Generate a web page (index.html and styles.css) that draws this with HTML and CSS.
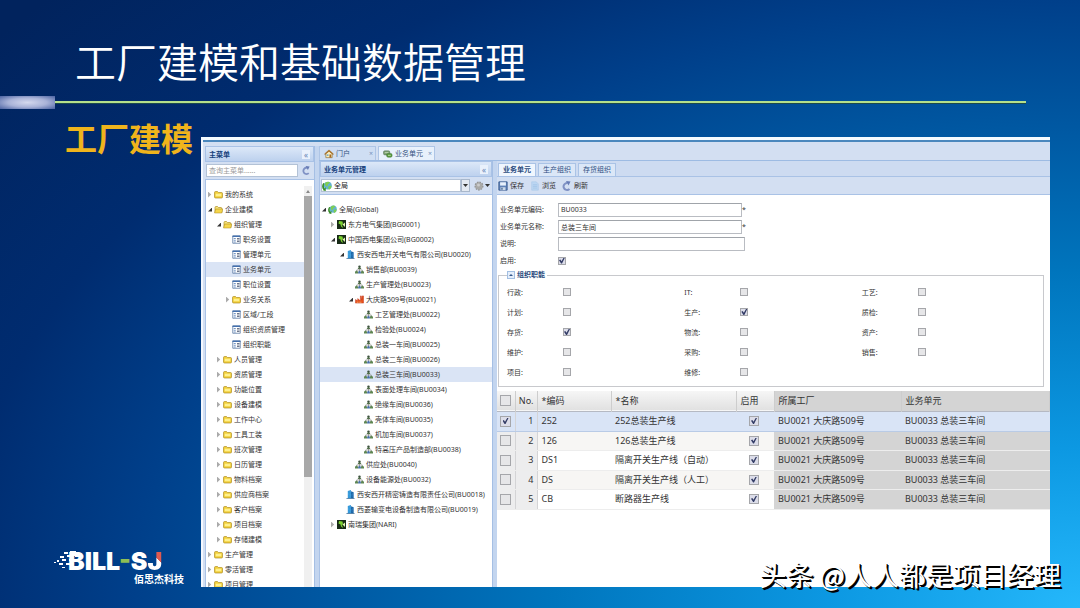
FILE: index.html
```html
<!DOCTYPE html>
<html lang="zh-CN">
<head>
<meta charset="utf-8">
<meta name="viewport" content="width=device-width, initial-scale=1">
<title>工厂建模和基础数据管理</title>
<link rel="stylesheet" href="styles.css">
</head>
<body>
<svg class="sprite" aria-hidden="true">
  <symbol id="folder" viewBox="0 0 18 16"><path d="M1 4.5Q1 2 3 2h4l2 2h6q2 0 2 2v7q0 2-2 2H3q-2 0-2-2z" fill="#f2cf3c" stroke="#a8861a" stroke-width="1.3"/><path d="M3.5 6.5h11v5h-11z" fill="#fff08c"/></symbol>
  <symbol id="folder-open" viewBox="0 0 18 16"><path d="M2 14V4q0-2 2-2h3l2 2h5q2 0 2 3v7z" fill="#f7e47a" stroke="#a8861a" stroke-width="1.3"/><path d="M1 15l2.500-8H17.500L15.500 15z" fill="#f5d64c" stroke="#a8861a"/></symbol>
  <symbol id="form" viewBox="0 0 18 18"><path d="M1.500 2h15v14.500h-15z" fill="#fff" stroke="#54749f" stroke-width="1.500"/><path d="M1 1h16v3H1z" fill="#4570ad"/><path d="M3.500 7h4M3.500 10.500h4M3.500 14h4" stroke="#4b76b2" stroke-width="1.500"/><path d="M10 7h5M10 10h5M10 13h5" stroke="#222f4c" stroke-width="1.300"/></symbol>
  <symbol id="org" viewBox="0 0 20 18"><path d="M10 6v4M4 13v-3h12v3M10 10v3" fill="none" stroke="#666" stroke-width="1.200"/><circle cx="10" cy="3" r="2.800" fill="#3b513c"/><path d="M6 8q0-3 4-3t4 3z" fill="#54734b"/><path d="M0 18v-4l3-3 4 3v4zM13 18v-4l3-3 4 3v4z" fill="#5f8653"/><path d="M7 18v-4l3-2 3 2v4z" fill="#4871ab"/></symbol>
  <symbol id="globe" viewBox="0 0 24 24"><circle cx="14" cy="11" r="9.500" fill="#63b3d1"/><path d="M9 3q7-3 10 0-1 4-5 5 1 4-3 6-4-3-4-6zM15 14q5-4 8-2 0 6-6 9-3-2-2-7z" fill="#7fce52"/><path d="M3 5q-6 9 1 17H0l9 2V15l-3 3Q3 12 6 6z" fill="#368d28"/></symbol>
  <symbol id="group" viewBox="0 0 18 18"><path d="M0 0h18v18H0z" fill="#182b17"/><path d="M4 2l7 1 1 5-2 2 2 6-4-3-1-4-4-2z" fill="#7ad02f"/><path d="M11 9l5-4v9z" fill="#dff7b0"/></symbol>
  <symbol id="building" viewBox="0 0 18 20"><path d="M3 2l7-2v19H3z" fill="#2e95d8"/><path d="M10 3l6 2v14h-6z" fill="#1562a6"/><path d="M5 4v12M8 3v13M12 6v10M14 7v9" stroke="#9ad3f3" stroke-dasharray="1 2"/><path d="M0 19h18" stroke="#517da3" stroke-width="2"/></symbol>
  <symbol id="plant" viewBox="0 0 20 18"><path d="M1 17V9l5 3V7l6 5V1h2l1 9 1-9h3v16z" fill="#e7511c" stroke="#bd3216"/><path d="M4 15h2M8 15h2M12 15h2" stroke="#ffe7a1" stroke-width="2"/></symbol>
  <symbol id="house" viewBox="0 0 22 20"><path d="M4 9v9h14V9l-7-6z" fill="#f8edbf" stroke="#8c6e36" stroke-width="1.500"/><path d="M1 10L11 1l10 9-1 1-9-7-9 7z" fill="#c78324" stroke="#8c5417"/><path d="M12 11h4v7h-4z" fill="#a86920"/><path d="M6 11h4v3H6z" fill="#5c9bc7"/></symbol>
  <symbol id="unit" viewBox="0 0 22 18"><rect x="1" y="2" width="14" height="9" rx="3" fill="#7b9f73" stroke="#49674d"/><rect x="8" y="8" width="12" height="8" rx="3" fill="#5a9c3d" stroke="#386a2e"/><path d="M4 6h8M11 12h6" stroke="#d9edca" stroke-width="1.500"/></symbol>
  <symbol id="disk" viewBox="0 0 24 24"><path d="M2 2h20v20H2z" fill="#5f82b7" stroke="#34578c" stroke-width="2"/><path d="M5 3h14v8H5z" fill="#e7f1fc"/><path d="M6 15h12v7H6z" fill="#cbdaea"/><path d="M8 16h3v5H8z" fill="#3e5c87"/></symbol>
  <symbol id="page" viewBox="0 0 20 24"><path d="M2 2h11l5 5v15H2z" fill="#bcd6f2" stroke="#9cbfe4"/><path d="M5 9h10M5 13h10M5 17h10" stroke="#8bb3de"/></symbol>
  <symbol id="refresh" viewBox="0 0 20 20"><path d="M15 16A7 7 0 1 1 11 4" fill="none" stroke="#7f91c4" stroke-width="4"/><path d="M8 0l9 1-4 8z" fill="#667bb5"/></symbol>
  <symbol id="gear" viewBox="0 0 20 20"><circle cx="10" cy="10" r="7" fill="#aaa" stroke="#8f8f8f" stroke-width="4" stroke-dasharray="3 1.700"/><circle cx="10" cy="10" r="7" fill="#a9a9a7"/><circle cx="9" cy="8" r="3" fill="#ccc"/></symbol>
</svg>

<div class="slide">
  <header class="slide-head">
    <h1>工厂建模和基础数据管理</h1>
    <div class="rule"><span class="rule-cap"></span><span class="rule-line"></span></div>
  </header>
  <div class="slide-body">
    <aside class="side">
      <h2>工厂建模</h2>
      <div class="brand">
        <div class="brand-row">
          <svg class="pixels" viewBox="0 0 26 20" aria-hidden="true"><path d="M10 1h4v2h-4zM16 0h6v2h-6zM6 5h4v2H6zM13 4h5v2h-5zM21 4h5v2h-5zM3 9h2v2H3zM8 8h4v2H8zM15 8h6v2h-6zM0 11h2v1H0zM5 12h4v2H5zM12 12h4v2h-4zM8 16h3v1H8z" fill="#fff"/></svg>
          <span class="brand-name">BILL<span class="dash">-</span>S<span class="jay">J</span></span>
        </div>
        <div class="brand-sub">佰思杰科技</div>
      </div>
    </aside>

    <main class="app">
      <section class="menu">
        <header class="panel-head"><b>主菜单</b><button class="fold" aria-label="折叠主菜单">«</button></header>
        <div class="search"><input type="text" aria-label="查询主菜单" placeholder="查询主菜单......"><button class="plain" aria-label="刷新"><svg class="ico"><use href="#refresh"/></svg></button></div>
        <div class="menu-body">
          <ul class="tree">
            <li class="l1 shut"><svg class="ico"><use href="#folder"/></svg><a href="#">我的系统</a></li>
            <li class="l1 open"><svg class="ico"><use href="#folder-open"/></svg><a href="#">企业建模</a></li>
            <li class="l2 open"><svg class="ico"><use href="#folder-open"/></svg><a href="#">组织管理</a></li>
            <li class="l3"><svg class="ico"><use href="#form"/></svg><a href="#">职务设置</a></li>
            <li class="l3"><svg class="ico"><use href="#form"/></svg><a href="#">管理单元</a></li>
            <li class="l3 current"><svg class="ico"><use href="#form"/></svg><a href="#">业务单元</a></li>
            <li class="l3"><svg class="ico"><use href="#form"/></svg><a href="#">职位设置</a></li>
            <li class="l3 shut"><svg class="ico"><use href="#folder"/></svg><a href="#">业务关系</a></li>
            <li class="l3"><svg class="ico"><use href="#form"/></svg><a href="#">区域/工段</a></li>
            <li class="l3"><svg class="ico"><use href="#form"/></svg><a href="#">组织资质管理</a></li>
            <li class="l3"><svg class="ico"><use href="#form"/></svg><a href="#">组织职能</a></li>
            <li class="l2 shut"><svg class="ico"><use href="#folder"/></svg><a href="#">人员管理</a></li>
            <li class="l2 shut"><svg class="ico"><use href="#folder"/></svg><a href="#">资质管理</a></li>
            <li class="l2 shut"><svg class="ico"><use href="#folder"/></svg><a href="#">功能位置</a></li>
            <li class="l2 shut"><svg class="ico"><use href="#folder"/></svg><a href="#">设备建模</a></li>
            <li class="l2 shut"><svg class="ico"><use href="#folder"/></svg><a href="#">工作中心</a></li>
            <li class="l2 shut"><svg class="ico"><use href="#folder"/></svg><a href="#">工具工装</a></li>
            <li class="l2 shut"><svg class="ico"><use href="#folder"/></svg><a href="#">班次管理</a></li>
            <li class="l2 shut"><svg class="ico"><use href="#folder"/></svg><a href="#">日历管理</a></li>
            <li class="l2 shut"><svg class="ico"><use href="#folder"/></svg><a href="#">物料档案</a></li>
            <li class="l2 shut"><svg class="ico"><use href="#folder"/></svg><a href="#">供应商档案</a></li>
            <li class="l2 shut"><svg class="ico"><use href="#folder"/></svg><a href="#">客户档案</a></li>
            <li class="l2 shut"><svg class="ico"><use href="#folder"/></svg><a href="#">项目档案</a></li>
            <li class="l2 shut"><svg class="ico"><use href="#folder"/></svg><a href="#">存储建模</a></li>
            <li class="l1 shut"><svg class="ico"><use href="#folder"/></svg><a href="#">生产管理</a></li>
            <li class="l1 shut"><svg class="ico"><use href="#folder"/></svg><a href="#">零活管理</a></li>
            <li class="l1 shut"><svg class="ico"><use href="#folder"/></svg><a href="#">项目管理</a></li>
          </ul>
          <div class="scroll"><span class="scroll-up"></span><span class="thumb"></span></div>
        </div>
      </section>
      <div class="split"></div>

      <div class="work">
        <nav class="tabs">
          <button class="tab"><svg class="ico big"><use href="#house"/></svg>门户<i>×</i></button>
          <button class="tab on"><svg class="ico big"><use href="#unit"/></svg>业务单元<i>×</i></button>
        </nav>
        <div class="panes">
          <section class="units">
            <header class="panel-head"><b>业务单元管理</b><button class="fold" aria-label="折叠业务单元管理">«</button></header>
            <div class="scope">
              <svg class="ico big"><use href="#globe"/></svg>
              <select aria-label="范围"><option>全局</option></select>
              <span class="drop"></span>
              <button class="plain" aria-label="设置"><svg class="ico big"><use href="#gear"/></svg><span class="caret"></span></button>
            </div>
            <ul class="tree">
              <li class="l1 open"><svg class="ico"><use href="#globe"/></svg><a href="#">全局(Global)</a></li>
              <li class="l2 shut"><svg class="ico"><use href="#group"/></svg><a href="#">东方电气集团(BG0001)</a></li>
              <li class="l2 open"><svg class="ico"><use href="#group"/></svg><a href="#">中国西电集团公司(BG0002)</a></li>
              <li class="l3 open"><svg class="ico"><use href="#building"/></svg><a href="#">西安西电开关电气有限公司(BU0020)</a></li>
              <li class="l4"><svg class="ico"><use href="#org"/></svg><a href="#">销售部(BU0039)</a></li>
              <li class="l4"><svg class="ico"><use href="#org"/></svg><a href="#">生产管理处(BU0023)</a></li>
              <li class="l4 open"><svg class="ico"><use href="#plant"/></svg><a href="#">大庆路509号(BU0021)</a></li>
              <li class="l5"><svg class="ico"><use href="#org"/></svg><a href="#">工艺管理处(BU0022)</a></li>
              <li class="l5"><svg class="ico"><use href="#org"/></svg><a href="#">检验处(BU0024)</a></li>
              <li class="l5"><svg class="ico"><use href="#org"/></svg><a href="#">总装一车间(BU0025)</a></li>
              <li class="l5"><svg class="ico"><use href="#org"/></svg><a href="#">总装二车间(BU0026)</a></li>
              <li class="l5 current"><svg class="ico"><use href="#org"/></svg><a href="#">总装三车间(BU0033)</a></li>
              <li class="l5"><svg class="ico"><use href="#org"/></svg><a href="#">表面处理车间(BU0034)</a></li>
              <li class="l5"><svg class="ico"><use href="#org"/></svg><a href="#">绝缘车间(BU0036)</a></li>
              <li class="l5"><svg class="ico"><use href="#org"/></svg><a href="#">壳体车间(BU0035)</a></li>
              <li class="l5"><svg class="ico"><use href="#org"/></svg><a href="#">机加车间(BU0037)</a></li>
              <li class="l5"><svg class="ico"><use href="#org"/></svg><a href="#">特高压产品制造部(BU0038)</a></li>
              <li class="l4"><svg class="ico"><use href="#org"/></svg><a href="#">供应处(BU0040)</a></li>
              <li class="l4"><svg class="ico"><use href="#org"/></svg><a href="#">设备能源处(BU0032)</a></li>
              <li class="l3"><svg class="ico"><use href="#building"/></svg><a href="#">西安西开精密铸造有限责任公司(BU0018)</a></li>
              <li class="l3"><svg class="ico"><use href="#building"/></svg><a href="#">西菱输变电设备制造有限公司(BU0019)</a></li>
              <li class="l2 shut"><svg class="ico"><use href="#group"/></svg><a href="#">南瑞集团(NARI)</a></li>
            </ul>
          </section>
          <div class="split"></div>

          <section class="detail">
            <nav class="subtabs"><button class="on">业务单元</button><button>生产组织</button><button>存货组织</button></nav>
            <div class="toolbar">
              <button><svg class="ico big"><use href="#disk"/></svg>保存</button>
              <button><svg class="ico big"><use href="#page"/></svg>浏览</button>
              <button><svg class="ico big"><use href="#refresh"/></svg>刷新</button>
            </div>
            <form class="form">
              <div class="row"><label for="code">业务单元编码:</label><input id="code" type="text" value="BU0033"><span class="star">*</span></div>
              <div class="row"><label for="name">业务单元名称:</label><input id="name" type="text" value="总装三车间"><span class="star">*</span></div>
              <div class="row"><label for="note">说明:</label><input id="note" class="wide" type="text"></div>
              <div class="row"><label for="on">启用:</label><input id="on" type="checkbox" checked></div>
              <fieldset>
                <legend><button type="button" class="toggle" aria-label="收起"></button>组织职能</legend>
                <div class="checks">
                  <div><label for="c1">行政:</label><input id="c1" type="checkbox"></div>
                  <div><label for="c2">IT:</label><input id="c2" type="checkbox"></div>
                  <div><label for="c3">工艺:</label><input id="c3" type="checkbox"></div>
                  <div><label for="c4">计划:</label><input id="c4" type="checkbox"></div>
                  <div><label for="c5">生产:</label><input id="c5" type="checkbox" checked></div>
                  <div><label for="c6">质检:</label><input id="c6" type="checkbox"></div>
                  <div><label for="c7">存货:</label><input id="c7" type="checkbox" checked></div>
                  <div><label for="c8">物流:</label><input id="c8" type="checkbox"></div>
                  <div><label for="c9">资产:</label><input id="c9" type="checkbox"></div>
                  <div><label for="c10">维护:</label><input id="c10" type="checkbox"></div>
                  <div><label for="c11">采购:</label><input id="c11" type="checkbox"></div>
                  <div><label for="c12">销售:</label><input id="c12" type="checkbox"></div>
                  <div><label for="c13">项目:</label><input id="c13" type="checkbox"></div>
                  <div><label for="c14">维修:</label><input id="c14" type="checkbox"></div>
                </div>
              </fieldset>
            </form>
            <table class="lines">
              <colgroup><col class="w-pick"><col class="w-no"><col class="w-code"><col class="w-name"><col class="w-on"><col class="w-plant"><col></colgroup>
              <thead><tr><th class="pick"><input type="checkbox" aria-label="全选"></th><th class="no">No.</th><th>*编码</th><th>*名称</th><th>启用</th><th class="lock">所属工厂</th><th class="lock">业务单元</th></tr></thead>
              <tbody>
                <tr class="current"><td class="pick"><input type="checkbox" aria-label="选择 252" checked></td><td class="no">1</td><td>252</td><td>252总装生产线</td><td class="on"><input type="checkbox" aria-label="启用 252" checked></td><td class="lock">BU0021 大庆路509号</td><td class="lock">BU0033 总装三车间</td></tr>
                <tr><td class="pick"><input type="checkbox" aria-label="选择 126"></td><td class="no">2</td><td>126</td><td>126总装生产线</td><td class="on"><input type="checkbox" aria-label="启用 126" checked></td><td class="lock">BU0021 大庆路509号</td><td class="lock">BU0033 总装三车间</td></tr>
                <tr><td class="pick"><input type="checkbox" aria-label="选择 DS1"></td><td class="no">3</td><td>DS1</td><td>隔离开关生产线（自动）</td><td class="on"><input type="checkbox" aria-label="启用 DS1" checked></td><td class="lock">BU0021 大庆路509号</td><td class="lock">BU0033 总装三车间</td></tr>
                <tr><td class="pick"><input type="checkbox" aria-label="选择 DS"></td><td class="no">4</td><td>DS</td><td>隔离开关生产线（人工）</td><td class="on"><input type="checkbox" aria-label="启用 DS" checked></td><td class="lock">BU0021 大庆路509号</td><td class="lock">BU0033 总装三车间</td></tr>
                <tr><td class="pick"><input type="checkbox" aria-label="选择 CB"></td><td class="no">5</td><td>CB</td><td>断路器生产线</td><td class="on"><input type="checkbox" aria-label="启用 CB" checked></td><td class="lock">BU0021 大庆路509号</td><td class="lock">BU0033 总装三车间</td></tr>
              </tbody>
            </table>
          </section>
        </div>
      </div>
    </main>
  </div>
  <div class="credit">头条 @人人都是项目经理</div>
</div>
</body>
</html>
```

FILE: styles.css
```css
* { box-sizing: border-box; }

body {
  margin: 0;
  font-family: "Noto Sans", "Noto Sans CJK SC", sans-serif;
  color: #333;
}

h1, h2, ul { margin: 0; padding: 0; }
ul { list-style: none; }

button, input, select {
  font: inherit;
  color: inherit;
  margin: 0;
  padding: 0;
  border: 0;
  background: none;
}

.sprite { display: none; }

.slide {
  position: relative;
  display: flex;
  flex-direction: column;
  height: 100vh;
  padding-bottom: 21px;
  background: radial-gradient(ellipse 116% 132% at 100% 100%, #25b8fb 0, #0c98e2 20%, #0075bd 42%, #0058a2 60%, #003f8a 76%, #002c70 90%, #01235d 112%);
}

/* heading */
.slide-head { flex: none; }
.slide-head h1 {
  padding: 30px 0 6px 75px;
  font-family: "Noto Sans CJK SC", sans-serif;
  font-size: 41px;
  font-weight: 350;
  line-height: 60px;
  color: #fff;
}
.rule { display: flex; align-items: center; padding-right: 54px; }
.rule-cap {
  width: 55px;
  height: 13px;
  background: radial-gradient(ellipse at center, #d5d9ee 0, #a9b3d8 50%, #4a62a2 100%);
}
.rule-line {
  flex: 1;
  height: 3px;
  background: #b5e08a;
  border-bottom: 1px solid #1c4a4c;
}

.slide-body { display: flex; flex: 1; min-height: 0; padding-right: 30px; }

.side {
  display: flex;
  flex-direction: column;
  justify-content: space-between;
  flex: none;
  width: 201px;
  padding: 7px 0 0;
}
.side h2 {
  padding-left: 65px;
  font-family: "Noto Sans CJK SC", sans-serif;
  font-size: 32px;
  font-weight: 700;
  line-height: 42px;
  color: #f0b41c;
}

.brand { padding-left: 54px; color: #fff; }
.brand-row { display: flex; align-items: center; }
.pixels { width: 26px; height: 20px; margin-right: -12px; }
.brand-name { font: 900 25px/22px Inter, sans-serif; }
.dash { color: #8fbe55; }
.jay { background: linear-gradient(225deg, #e05a50 0, #e05a50 40%, #fff 40%); background-clip: text; -webkit-background-clip: text; color: transparent; }
.brand-sub {
  padding-left: 80px;
  font: 700 10px/14px "Noto Sans CJK SC", sans-serif;
  margin-bottom: 1px;
}

/* application window */
.app {
  display: flex;
  flex: 1;
  min-width: 0;
  margin-top: 28px;
  overflow: hidden;
  font-size: 7px;
  line-height: 15px;
  background: #d3dff2;
  border-top: 3px solid #f4fbff;
  border-left: 2px solid #f4f8ff;
  box-shadow: inset 0 2px #4a87bd;
  padding: 6px 0 0 2px;
}
.ico { flex: none; width: 9px; height: 9px; }
.ico.big { width: 10px; height: 10px; }
.split { flex: none; width: 5px; background: #c3d5ef; border-left: 1px solid #a5bfe4; }

.panel-head {
  display: flex;
  flex: none;
  align-items: center;
  justify-content: space-between;
  height: 16px;
  padding: 0 3px;
  background: linear-gradient(#dce8f8, #bdd1ee);
  border: 1px solid #a9c2e6;
  color: #16417c;
}
.fold {
  width: 8px;
  height: 9px;
  font-size: 8px;
  line-height: 7px;
  color: #6483b4;
  background: #e9f1fc;
}
.plain { display: flex; align-items: center; gap: 1px; }

.menu { display: flex; flex-direction: column; flex: none; width: 109px; }
.search { display: flex; align-items: center; gap: 4px; flex: none; height: 17px; padding: 0 3px 0 1px; }
.search input { flex: 1; min-width: 0; height: 13px; padding: 0 2px; background: #fff; border: 1px solid #b3c2d6; }
.search input::placeholder { color: #9a9a9a; opacity: 1; }

.menu-body { display: flex; flex: 1; min-height: 0; background: #fff; border: 1px solid #a9c2e6; border-width: 1px 0 0 1px; }
.menu-body .tree { flex: 1; min-width: 0; padding-top: 7px; }
.scroll { flex: none; width: 8px; margin: 6px 2px 0 0; background: #f0f0f0; }
.scroll-up { display: block; height: 10px; padding-top: 4px; }
.scroll-up::before { content: ""; display: block; width: 4px; height: 3px; margin: auto; background: #888; clip-path: polygon(50% 0, 100% 100%, 0 100%); }
.thumb { display: block; height: 70%; background: #a8a8a8; }

.tree li { display: flex; align-items: center; gap: 2px; height: 15px; white-space: nowrap; }
.tree a { color: #333; text-decoration: none; }
.l1 { padding-left: 8px; }
.l2 { padding-left: 17px; }
.l3 { padding-left: 26px; }
.l4 { padding-left: 35px; }
.l5 { padding-left: 44px; }
.tree .current { background: #dae4f5; }
.open::before, .shut::before { content: ""; width: 4px; margin: 0 0 0 -6px; }
.open::before { height: 4px; background: #333; clip-path: polygon(100% 0, 100% 100%, 0 100%); }
.shut::before { height: 6px; background: #aaa; clip-path: polygon(0 0, 80% 50%, 0 100%); }

.work { display: flex; flex-direction: column; flex: 1; min-width: 0; }
.tabs { display: flex; flex: none; gap: 2px; height: 15px; border-bottom: 1px solid #9dbbe3; }
.tab {
  display: flex;
  align-items: center;
  gap: 2px;
  width: 57px;
  padding: 0 2px 0 4px;
  font-size: 7px;
  color: #33527f;
  background: #cfdef3;
  border: 1px solid #aec5e6;
  border-bottom: 0;
}
.tab i { margin-left: auto; font-style: normal; line-height: 7px; color: #7792bb; }
.tab.on { background: #e8f1fc; }
.panes { display: flex; flex: 1; min-height: 0; }

.units { display: flex; flex-direction: column; flex: none; width: 173px; background: #fff; border-left: 1px solid #a9c2e6; }
.scope { display: flex; align-items: center; flex: none; height: 18px; padding: 1px 2px; background: #d3dff2; border-bottom: 1px solid #a9c2e6; }
.scope > .ico { margin-right: -11px; z-index: 1; }
.scope select { appearance: none; flex: 1; height: 13px; padding-left: 12px; line-height: 12px; color: #222; background: #fff; border: 1px solid #b3c2d6; }
.drop { display: grid; place-items: center; width: 9px; height: 13px; margin-right: 4px; background: #e3e9f1; border: 1px solid #a8b7cb; }
.drop::before, .caret { content: ""; width: 5px; height: 3px; background: #333; clip-path: polygon(0 0, 100% 0, 50% 100%); }
.units .tree { padding-top: 7px; }

.detail { display: flex; flex-direction: column; flex: 1; min-width: 0; background: #fff; }
.subtabs { display: flex; flex: none; gap: 2px; height: 16px; padding: 2px 0 0 1px; background: #cddbf1; border-bottom: 1px solid #a9c2e6; }
.subtabs button { padding: 0 4px; line-height: 12px; color: #2b4c80; background: #dbe7f7; border: 1px solid #aac3e6; border-bottom: 0; }
.subtabs .on { font-weight: 700; background: #f0f6fe; }
.toolbar { display: flex; flex: none; gap: 6px; height: 18px; padding: 0 1px; background: #d3dff2; border-bottom: 1px solid #a9c2e6; }
.toolbar button { display: flex; align-items: center; gap: 2px; }

.form { padding: 6px 6px 4px 1px; }
.row { display: flex; align-items: center; height: 17px; padding-left: 2px; }
.row label { width: 58px; }
.row input[type="text"] { width: 184px; height: 14px; padding: 0 2px; line-height: 12px; border: 1px solid #b9bcc2; border-top-color: #a0a4aa; }
.row input.wide[type="text"] { width: 187px; }
.star { line-height: 7px; }

input[type="checkbox"] {
  appearance: none;
  display: grid;
  place-items: center;
  width: 8px;
  height: 8px;
  background: #e6e6e8;
  border: 1px solid #a5a6aa;
}
input[type="checkbox"]:checked { background: #dcdde9; }
input[type="checkbox"]:checked::before {
  content: "";
  width: 6px;
  height: 6px;
  background: #333c66;
  clip-path: polygon(0 45%, 22% 35%, 42% 62%, 78% 0, 100% 0, 50% 100%, 35% 100%);
}

fieldset { min-width: 0; height: 118px; margin: 0; padding: 1px 4px 0 8px; border: 1px solid #c8c9cd; }
legend { display: flex; align-items: center; gap: 2px; height: 12px; padding: 0 2px 0 0; font-weight: 700; line-height: 12px; color: #28497c; }
.toggle { display: grid; place-items: center; width: 8px; height: 8px; background: #e4eefb; border: 1px solid #a3bfe2; }
.toggle::before { content: ""; width: 4px; height: 2px; background: #31568c; clip-path: polygon(50% 0, 100% 100%, 0 100%); }
.checks { display: grid; grid-template-columns: repeat(3, 1fr); }
.checks div { display: flex; align-items: center; height: 20px; }
.checks label { width: 56px; }

.lines { width: 100%; table-layout: fixed; border-collapse: collapse; font-size: 9px; line-height: 14px; white-space: nowrap; }
.w-pick { width: 18px; }
.w-no { width: 22px; }
.w-code { width: 74px; }
.w-name { width: 125px; }
.w-on { width: 38px; }
.w-plant { width: 127px; }
.lines th, .lines td { padding: 0 4px; text-align: left; font-weight: 400; }
.lines tr { height: 20px; }
.lines tbody tr:nth-child(even) { height: 19px; background: #f7f6f4; }
.lines thead tr { background: linear-gradient(#f6f6f6, #e1e1e1); border-bottom: 1px solid #b5b9c3; }
.lines th { border-right: 1px solid #cdcdcd; }
.lines td { border-bottom: 1px solid #ededed; }
.lines .no { padding: 0 3px 0 0; text-align: right; }
.lines td.no, .lines td.pick { background: #ededee; border-right: 1px solid #d4d4d6; }
.lines .pick { padding: 0 3px; }
.lines .pick input { width: 11px; height: 11px; }
.lines .on { padding-left: 13px; }
.lines .on input { width: 10px; height: 10px; }
.lines .lock { background: #d4d4d4; }
.lines .current td { background: #d9e4f6; border-bottom-color: #b9cbe6; }

.credit {
  position: absolute;
  right: 19px;
  bottom: 13px;
  font: 400 27px/40px "Noto Sans CJK SC", sans-serif;
  color: #fff;
  text-shadow: 1px 1px #000, 2px 2px #000;
}
```
